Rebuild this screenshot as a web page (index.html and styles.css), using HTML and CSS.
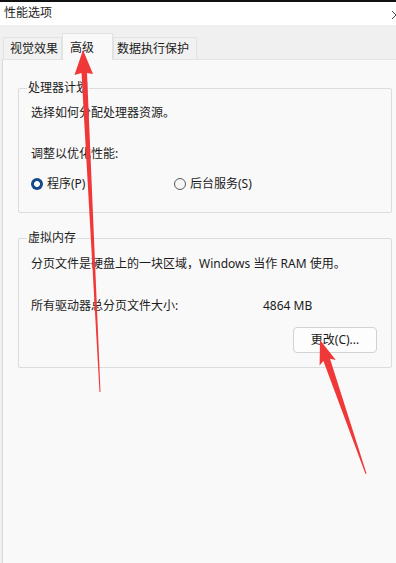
FILE: index.html
```html
<!DOCTYPE html>
<html lang="zh-CN">
<head>
<meta charset="utf-8">
<title>性能选项</title>
<link rel="stylesheet" href="styles.css">
</head>
<body>
<div class="window">
  <div class="titlebar">
    <span class="title">性能选项</span>
    <svg class="close" width="4" height="10" viewBox="0 0 4 10"><path d="M0 1 L4 5 M0 9 L4 5" stroke="#333" stroke-width="0.9" fill="none"/></svg>
  </div>
  <div class="tabs">
    <div class="tab t1">视觉效果</div>
    <div class="tab t2 active">高级</div>
    <div class="tab t3">数据执行保护</div>
  </div>
  <div class="panel">
    <fieldset class="group g1">
      <legend>处理器计划</legend>
      <p class="line l1">选择如何分配处理器资源。</p>
      <p class="line l2">调整以优化性能:</p>
      <div class="radios">
        <label class="radio"><span class="dot checked"></span>程序(P)</label>
        <label class="radio"><span class="dot"></span>后台服务(S)</label>
      </div>
    </fieldset>
    <fieldset class="group g2">
      <legend>虚拟内存</legend>
      <p class="line l3">分页文件是硬盘上的一块区域，Windows 当作 RAM 使用。</p>
      <div class="size-row"><span>所有驱动器总分页文件大小:</span><span>4864 MB</span></div>
      <div class="btn-row"><button class="btn" type="button">更改(C)...</button></div>
    </fieldset>
  </div>
  <svg class="arrows" width="396" height="563" viewBox="0 0 396 563">
    <polygon fill="#f03838" points="83,50 74.5,75 81.5,73 99.5,392 100.5,392 87,73 93,74"/>
    <polygon fill="#f03838" points="320,340 319.6,365.4 323.4,361 365.5,474 366.5,473.6 330,358.8 335.8,360"/>
  </svg>
</div>
</body>
</html>
```
FILE: styles.css
```css
html, body {
  margin: 0;
  padding: 0;
  background: #f0f0f0;
}
body {
  font-family: "Noto Sans", "Noto Sans CJK SC", sans-serif;
  font-size: 12px;
  color: #1b1b1b;
}
.window {
  position: relative;
  width: 396px;
  height: 563px;
  overflow: hidden;
  background: #f0f0f0;
  border-top: 2px solid #111;
  box-sizing: border-box;
}
.titlebar {
  height: 23px;
  box-sizing: border-box;
  background: #fff;
  display: flex;
  justify-content: space-between;
  align-items: flex-start;
  padding: 3px 0 0 4px;
  line-height: 16px;
}
.close {
  margin-top: 5px;
}
.tabs {
  height: 34px;
  box-sizing: border-box;
  display: flex;
  align-items: flex-end;
  padding-left: 3px;
}
.tab {
  height: 22px;
  box-sizing: border-box;
  border: 1px solid #e2e2e2;
  border-bottom: none;
  background: #f1f1f1;
  line-height: 18px;
  padding-top: 2px;
  white-space: nowrap;
}
.t1 { width: 59px; padding-left: 6px; }
.t2 { width: 51px; padding-left: 7px; }
.t3 { width: 84px; padding-left: 3px; }
.tab.active {
  height: 27px;
  margin-bottom: -1px;
  padding-top: 5px;
  background: #f9f9f9;
  position: relative;
  z-index: 1;
}
.panel {
  height: 504px;
  box-sizing: border-box;
  margin-left: 2px;
  background: #f9f9f9;
  border-top: 1px solid #e3e3e3;
  border-left: 1px solid #d9d9d9;
  padding: 0 0 0 15px;
}
.group {
  width: 374px;
  box-sizing: border-box;
  margin: 0;
  min-width: 0;
  border: 1px solid #dcdcdc;
  border-radius: 2px;
  padding: 0 14px 0 12px;
}
.group legend {
  margin-left: -4px;
  padding: 0 1px;
  line-height: 16px;
}
.g1 {
  margin-top: 20px;
  padding-bottom: 20px;
}
.g2 {
  margin-top: 17px;
  padding-bottom: 14px;
}
.line {
  margin: 0;
  line-height: 16px;
  white-space: nowrap;
}
.l1 { margin-top: 9px; }
.l2 { margin-top: 25px; }
.l3 { margin-top: 10px; }
.radios {
  margin-top: 14px;
  display: grid;
  grid-template-columns: 143px auto;
  line-height: 16px;
}
.radio {
  display: flex;
  align-items: center;
  gap: 4px;
}
.dot {
  width: 12px;
  height: 12px;
  box-sizing: border-box;
  border-radius: 50%;
  border: 1px solid #5a5a5a;
  background: #f6f6f6;
}
.dot.checked {
  border: none;
  background: radial-gradient(circle, #ffffff 0 2.6px, #144a8c 3.2px);
}
.size-row {
  margin-top: 26px;
  display: grid;
  grid-template-columns: 232px auto;
  line-height: 16px;
}
.btn-row {
  margin-top: 13px;
  display: flex;
  justify-content: flex-end;
}
.btn {
  width: 84px;
  height: 26px;
  box-sizing: border-box;
  border: 1px solid #d2d2d2;
  border-radius: 4px;
  background: #fdfdfd;
  font-family: inherit;
  font-size: 12px;
  color: #1b1b1b;
  padding: 0;
  line-height: 24px;
}
.arrows {
  position: absolute;
  left: 0;
  top: -2px;
  pointer-events: none;
  z-index: 5;
}
```
